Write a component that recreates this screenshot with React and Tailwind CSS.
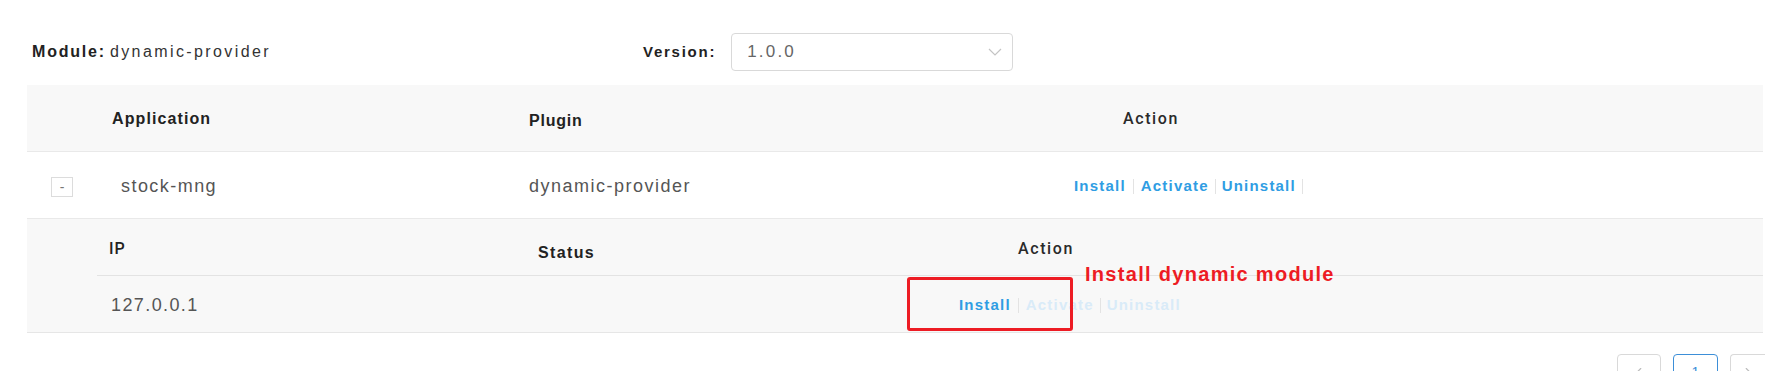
import { ChevronLeft, ChevronRight } from 'lucide-react';

function Links({ faded }) {
  const live = 'text-[#2f9de3]';
  const dim = faded ? 'text-[#d9ebf8]' : live;
  return (
    <div className="flex items-center text-[15px] font-bold tracking-[1.2px]">
      <span className={live}>Install</span>
      <span className="mx-[7px] h-[15px] w-px bg-[#e3e3e3]" />
      <span className={dim}>Activate</span>
      <span className="mx-[6px] h-[15px] w-px bg-[#e3e3e3]" />
      <span className={dim}>Uninstall</span>
      {!faded && <span className="ml-[6px] h-[15px] w-px bg-[#e3e3e3]" />}
    </div>
  );
}

export default function App() {
  return (
    <div className="relative h-[371px] w-[1765px] overflow-hidden bg-white font-['Liberation_Sans',Arial,sans-serif] text-[#333]">
      <div className="flex h-[71px] items-center pl-[32px] pt-[33px]">
        <div className="w-[611px] text-[16px] leading-none">
          <span className="font-bold tracking-[1.8px] text-[#222]">Module:</span>
          <span className="ml-[4px] tracking-[2.4px] text-[#333]">dynamic-provider</span>
        </div>
        <span className="text-[15px] font-bold tracking-[1.75px] text-[#222]">Version:</span>
        <div className="ml-[15px] flex h-[38px] w-[282px] items-center justify-between rounded-[4px] border border-[#d9d9d9] pl-[15px] pr-[9px]">
          <span className="text-[17px] tracking-[2.2px] text-[#666]">1.0.0</span>
          <svg width="14" height="9" viewBox="0 0 14 9" className="mr-[1px]">
            <polyline points="1,1 7,7 13,1" fill="none" stroke="#c4c4c4" strokeWidth="1.2" />
          </svg>
        </div>
      </div>

      <div className="ml-[27px] mt-[14px] w-[1736px]">
        <div className="grid h-[67px] grid-cols-[85px_417px_545px_1fr] items-center border-b border-[#e9e9e9] bg-[#f8f8f8] pt-[2px] text-[16px] font-bold text-[#222]">
          <span />
          <span className="tracking-[1.1px]">Application</span>
          <span className="pt-[4px] tracking-[0.8px]">Plugin</span>
          <span className="pl-[49px] font-['Roboto',sans-serif] font-medium tracking-[1.6px] text-[#2a2a2a]">Action</span>
        </div>

        <div className="grid h-[67px] grid-cols-[85px_417px_545px_1fr] items-center border-b border-[#e9e9e9] pt-[3px] text-[18px] text-[#555]">
          <span className="pl-[24px]">
            <span className="flex h-[20px] w-[22px] items-center justify-center border border-[#dcdcdc] text-[14px] leading-none text-[#777]">-</span>
          </span>
          <span className="pl-[9px] tracking-[1.45px]">stock-mng</span>
          <span className="tracking-[1.5px]">dynamic-provider</span>
          <Links />
        </div>

        <div className="border-b border-[#e6e6e6] bg-[#f8f8f8] pl-[70px]">
          <div className="grid h-[57px] grid-cols-[429px_433px_1fr] items-center border-b border-[#e3e3e3] pt-[3px] text-[16px] text-[#222]">
            <span className="pl-[12px] font-['Roboto',sans-serif] font-medium tracking-[1px]">IP</span>
            <span className="mt-[9px] pl-[12px] font-bold tracking-[1.35px]">Status</span>
            <span className="pl-[59px] font-['Roboto',sans-serif] font-medium tracking-[1.6px] text-[#2a2a2a]">Action</span>
          </div>
          <div className="grid h-[56px] grid-cols-[429px_433px_1fr] items-center pt-[3px] text-[18px] text-[#555]">
            <span className="pl-[14px] tracking-[1.4px]">127.0.0.1</span>
            <span />
            <Links faded />
          </div>
        </div>
      </div>

      <div className="mt-[21px] flex justify-end gap-[12px]">
        <div className="flex h-[36px] w-[44px] items-center justify-center rounded-[4px] border border-[#d9d9d9] text-[#bbb]">
          <ChevronLeft size={14} />
        </div>
        <div className="flex h-[36px] w-[45px] items-center justify-center rounded-[4px] border border-[#3d8fd8] text-[14px] text-[#3d8fd8]">1</div>
        <div className="flex h-[36px] w-[35px] items-center justify-center rounded-l-[4px] border border-r-0 border-[#d9d9d9] text-[#bbb]">
          <ChevronRight size={14} />
        </div>
      </div>

      <div className="absolute left-[907px] top-[277px] h-[54px] w-[166px] rounded-[3px] border-[3px] border-[#ed1c24]" />
      <div className="absolute left-[1085px] top-[264px] text-[20px] font-bold leading-none tracking-[1.3px] text-[#ed1c24]">Install dynamic module</div>
    </div>
  );
}
